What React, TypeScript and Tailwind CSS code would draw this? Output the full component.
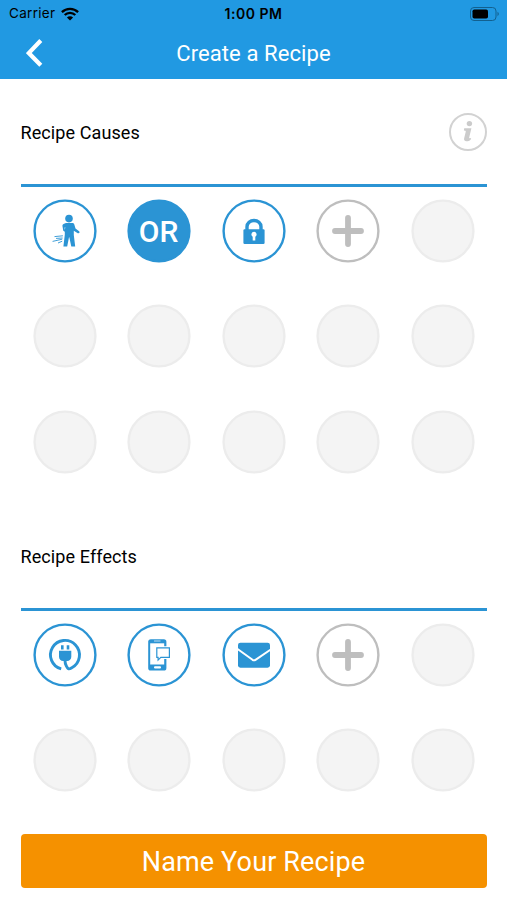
import React from "react";

type SlotType = "walk" | "or" | "lock" | "add" | "plug" | "message" | "mail" | "empty";

const BLUE = "#2b94d4";
const GRAY = "#bebebe";

const causes: SlotType[] = [
	"walk", "or", "lock", "add", "empty",
	"empty", "empty", "empty", "empty", "empty",
	"empty", "empty", "empty", "empty", "empty",
];

const effects: SlotType[] = [
	"plug", "message", "mail", "add", "empty",
	"empty", "empty", "empty", "empty", "empty",
];

const WalkIcon = () => (
	<g fill={BLUE}>
		<circle cx="36" cy="19.6" r="3.8" />
		<path d="M33 23.9h6.4c1 0 1.6.5 1.9 1.5l1.2 4.2 3.6 2.7c1.2 1 0 2.6-1.3 1.9l-4-2.5v4.2l1.4 11.7h-3.9l-2-9.4h-.3l-1.8 9.4h-3.8l1.4-11.8v-3.1l-1.5-.9-.9-5c0-1.6 1.8-2.4 3.6-2.9z" />
		<path d="M32.3 28l-.8.8.4 2.2z" fill="#fff" />
		<path d="M21.5 37.6l8.4-.8M23 39.4l6.6-.4M19.6 42.4l9.6-2.2M25 44l4.2-1.8" stroke={BLUE} strokeWidth="0.9" fill="none" />
	</g>
);

const LockIcon = () => (
	<g>
		<path d="M25 31v-3.2a7 6.3 0 0 1 14 0V31" fill="none" stroke={BLUE} strokeWidth="3.4" />
		<rect x="21.4" y="30.2" width="21.2" height="14.8" rx="1.2" fill={BLUE} />
		<path d="M32 32.7a2.7 2.7 0 0 1 1.3 5v3.9h-2.6v-3.9a2.7 2.7 0 0 1 1.3-5z" fill="#fff" />
	</g>
);

const PlugIcon = () => (
	<g>
		<path
			d="M28.2 45.9A14.5 14.5 0 1 1 38.8 44.7C35.4 46.9 34.6 45.6 33.4 43.2C32.5 41.4 32 40.3 32 37.5"
			fill="none"
			stroke={BLUE}
			strokeWidth="2.9"
		/>
		<path d="M26 27.8h12.3v6c0 2.4-1.8 4.2-4.2 4.2h-3.9c-2.4 0-4.2-1.8-4.2-4.2zM28 22.3h2.6v4.2H28zM33.7 22.3h2.6v4.2h-2.6z" fill={BLUE} />
	</g>
);

const MessageIcon = () => (
	<g>
		<rect x="21.2" y="16.2" width="18.2" height="31.4" rx="2.6" fill={BLUE} />
		<path d="M23.2 20.3h14v21.2h-14z" fill="#fff" />
		<path d="M27 18h6.5" stroke="#fff" strokeWidth="0.7" />
		<rect x="27" y="43.2" width="7" height="2.2" rx="1" fill="#fff" />
		<path d="M29.8 24.8h12.6v9.6h-8.6l-2.7 2.7v-2.7h-1.3z" fill="#fff" stroke="#fff" strokeWidth="3" />
		<path d="M29.8 24.8h12.6v9.6h-8.6l-2.7 2.7v-2.7h-1.3z" fill="#fff" stroke={BLUE} strokeWidth="1.2" />
	</g>
);

const MailIcon = () => (
	<g>
		<rect x="16" y="19.7" width="32" height="25" rx="2.4" fill={BLUE} />
		<path d="M14.5 25.2L30.5 36.8q1.5 1 3 0L49.5 26" fill="none" stroke="#fff" strokeWidth="2" />
	</g>
);

const AddIcon = () => (
	<path d="M32 19v26M19 32h26" stroke={GRAY} strokeWidth="5.8" strokeLinecap="round" />
);

const Slot = ({ type }: { type: SlotType }) => {
	const fill = type === "empty" ? "#f4f4f4" : type === "or" ? BLUE : "#fff";
	const stroke = type === "empty" ? "#ececec" : type === "add" ? GRAY : BLUE;

	return (
		<button className="flex h-16 w-16 items-center justify-center rounded-full">
			<svg viewBox="0 0 64 64" className="h-16 w-16">
				<circle cx="32" cy="32" r="30.4" fill={fill} stroke={stroke} strokeWidth="2.4" />
				{type === "walk" && <WalkIcon />}
				{type === "or" && (
					<text x="31.6" y="42.6" textAnchor="middle" fontSize="30" fontWeight="500" fill="#fff">
						OR
					</text>
				)}
				{type === "lock" && <LockIcon />}
				{type === "plug" && <PlugIcon />}
				{type === "message" && <MessageIcon />}
				{type === "mail" && <MailIcon />}
				{type === "add" && <AddIcon />}
			</svg>
		</button>
	);
};

const SlotGrid = ({ slots }: { slots: SlotType[] }) => (
	<div className="grid auto-rows-[64px] grid-cols-5 justify-items-center gap-y-[41.3px] pt-[12px] pr-[17px] pl-[17.4px]">
		{slots.map((type, i) => (
			<Slot key={i} type={type} />
		))}
	</div>
);

const StatusBar = () => (
	<div className="grid h-[27px] grid-cols-[1fr_auto_1fr] items-center px-[7px] text-black">
		<div className="flex items-center gap-[6px] pl-[2px]">
			<span className="font-['Inter'] text-[13.5px] leading-none tracking-[0.3px]">Carrier</span>
			<svg viewBox="0 0 18 14" className="h-[14px] w-[18px]">
				<path d="M.9 5.1a11.6 11.6 0 0 1 16.2 0M3.7 8a7.5 7.5 0 0 1 10.6 0" fill="none" stroke="#000" strokeWidth="2.3" />
				<path d="M9 13.6L5.9 10.5a4.4 4.4 0 0 1 6.2 0z" fill="#000" />
			</svg>
		</div>
		<span className="text-center font-['Inter'] text-[14px] leading-none font-semibold tracking-[0.5px]">1:00 PM</span>
		<svg viewBox="0 0 30 14" className="h-[14px] w-[30px] justify-self-end">
			<rect x="0.5" y="0.5" width="25.5" height="13" rx="3.5" fill="none" stroke="#12608f" />
			<rect x="2.5" y="2.4" width="15.5" height="9.2" rx="1.8" fill="#000" />
			<path d="M27.5 4.8q2.6 2.2 0 4.4z" fill="#12608f" />
		</svg>
	</div>
);

const App = () => {
	return (
		<div className="flex h-[900px] w-[507px] flex-col overflow-hidden bg-white font-['Roboto',sans-serif]">
			<header className="h-[79px] bg-[#2199e2]">
				<StatusBar />
				<div className="grid h-[52px] grid-cols-[60px_1fr_60px] items-center text-white">
					<button className="pl-[26px]">
						<svg viewBox="0 0 17 28" className="h-[28px] w-[17px]">
							<path d="M14.8 1.5L2.8 14l12 12.3" fill="none" stroke="#fff" strokeWidth="4.2" />
						</svg>
					</button>
					<h1 className="pt-px text-center text-[22px] leading-none tracking-[0.1px]">Create a Recipe</h1>
				</div>
			</header>

			{/* Causes */}
			<section className="h-[424px]">
				<div className="mx-[20.5px] flex h-[108px] items-center justify-between border-b-[3px] border-[#2b94d4]">
					<h2 className="pt-[3px] text-[18px] leading-none tracking-[0.1px] text-black">Recipe Causes</h2>
					<svg viewBox="0 0 38 38" className="h-[38px] w-[38px]">
						<circle cx="19" cy="19" r="18" fill="#fff" stroke="#d2d2d2" strokeWidth="2" />
						<circle cx="20.4" cy="10.6" r="2.7" fill="#cbcbcb" />
						<path d="M15.2 15.2h7.2l-2.2 9.4q-.2 1 1 .6l1-.3-.6 1.8c-2.4 2.2-7.2 2.4-6.5-1.1l1.7-7.1q.2-1.1-1.9-1.1z" fill="#cbcbcb" />
					</svg>
				</div>
				<SlotGrid slots={causes} />
			</section>

			{/* Effects */}
			<section className="h-[331px]">
				<div className="mx-[20.5px] flex h-[108px] items-center border-b-[3px] border-[#2b94d4]">
					<h2 className="pt-[3px] text-[18px] leading-none tracking-[0.1px] text-black">Recipe Effects</h2>
				</div>
				<SlotGrid slots={effects} />
			</section>

			<button className="mx-[20.5px] h-[53.5px] shrink-0 rounded-[4px] bg-[#f59100] pt-[4px] text-[27px] leading-none tracking-[0.13px] text-white">
				Name Your Recipe
			</button>
		</div>
	);
};

export default App;
